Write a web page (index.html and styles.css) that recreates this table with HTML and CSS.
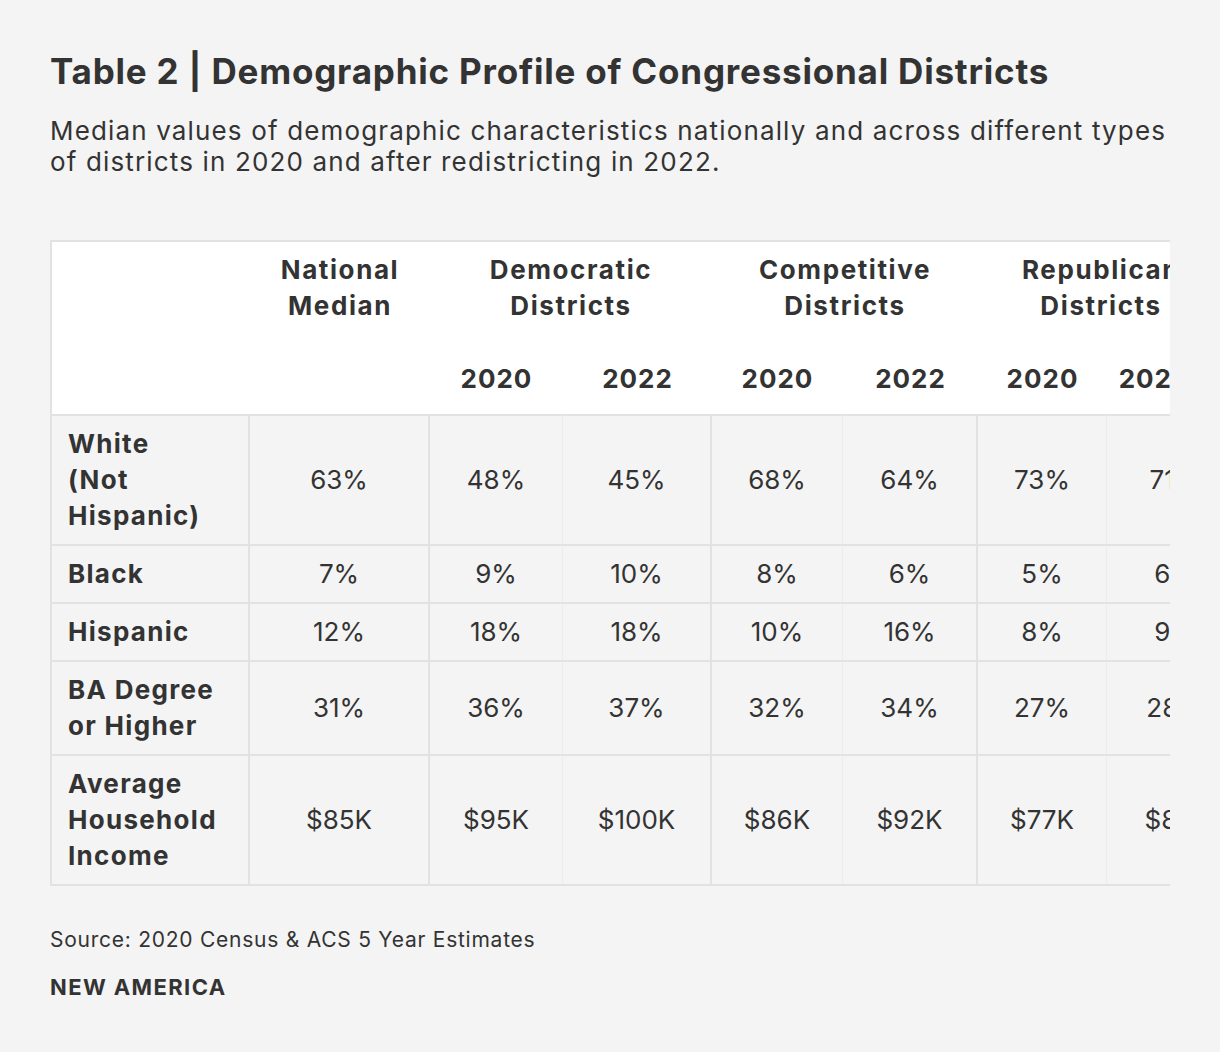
FILE: index.html
```html
<!DOCTYPE html>
<html lang="en">
<head>
<meta charset="utf-8">
<title>Table 2 | Demographic Profile of Congressional Districts</title>
<link rel="stylesheet" href="styles.css">
</head>
<body>
<main class="page">
  <h1 class="title">Table 2 | Demographic Profile of Congressional Districts</h1>
  <p class="subtitle">Median values of demographic characteristics nationally and across different types<br>of districts in 2020 and after redistricting in 2022.</p>
  <div class="table-wrap">
    <table class="data">
      <colgroup>
        <col class="c1"><col class="c2"><col class="c3"><col class="c4"><col class="c5"><col class="c6"><col class="c7"><col class="c8">
      </colgroup>
      <thead>
        <tr class="group-row">
          <th></th>
          <th>National<br>Median</th>
          <th colspan="2">Democratic<br>Districts</th>
          <th colspan="2">Competitive<br>Districts</th>
          <th colspan="2" class="last-group">Republican<br>Districts</th>
        </tr>
        <tr class="year-row">
          <th></th>
          <th></th>
          <th>2020</th><th>2022</th>
          <th>2020</th><th>2022</th>
          <th>2020</th><th class="last-year">2022</th>
        </tr>
      </thead>
      <tbody>
        <tr>
          <th>White<br>(Not<br>Hispanic)</th>
          <td class="g">63%</td><td class="s">48%</td><td class="g">45%</td><td class="s">68%</td><td class="g">64%</td><td class="s">73%</td><td>71%</td>
        </tr>
        <tr>
          <th>Black</th>
          <td class="g">7%</td><td class="s">9%</td><td class="g">10%</td><td class="s">8%</td><td class="g">6%</td><td class="s">5%</td><td>6%</td>
        </tr>
        <tr>
          <th>Hispanic</th>
          <td class="g">12%</td><td class="s">18%</td><td class="g">18%</td><td class="s">10%</td><td class="g">16%</td><td class="s">8%</td><td>9%</td>
        </tr>
        <tr>
          <th>BA Degree<br>or Higher</th>
          <td class="g">31%</td><td class="s">36%</td><td class="g">37%</td><td class="s">32%</td><td class="g">34%</td><td class="s">27%</td><td>28%</td>
        </tr>
        <tr>
          <th>Average<br>Household<br>Income</th>
          <td class="g">$85K</td><td class="s">$95K</td><td class="g">$100K</td><td class="s">$86K</td><td class="g">$92K</td><td class="s">$77K</td><td>$81K</td>
        </tr>
      </tbody>
    </table>
  </div>
  <p class="source">Source: 2020 Census &amp; ACS 5 Year Estimates</p>
  <p class="brand">NEW AMERICA</p>
</main>
</body>
</html>
```
FILE: styles.css
```css
html, body {
  margin: 0;
  padding: 0;
  background: #f4f4f4;
}

body {
  font-family: Inter, "Noto Sans", Arial, sans-serif;
  color: #333333;
}

.page {
  padding: 51px 50px 0 50px;
}

.title {
  margin: 0;
  font-size: 35px;
  line-height: 40px;
  font-weight: 700;
  letter-spacing: 0.8px;
  white-space: nowrap;
}

.subtitle {
  margin: 24px 0 0 0;
  font-size: 26px;
  line-height: 31px;
  font-weight: 400;
  letter-spacing: 1.15px;
  white-space: nowrap;
}

.table-wrap {
  margin-top: 63px;
  width: 1118px;
  overflow: hidden;
  border-top: 2px solid #e2e2e2;
  border-left: 2px solid #e2e2e2;
  border-bottom: 2px solid #e2e2e2;
}

.data {
  table-layout: fixed;
  width: 1191px;
  border-collapse: separate;
  border-spacing: 0;
  font-size: 26px;
  line-height: 36px;
}

.c1 { width: 198px; }
.c2 { width: 180px; }
.c3 { width: 133px; }
.c4 { width: 149px; }
.c5 { width: 131px; }
.c6 { width: 135px; }
.c7 { width: 129px; }
.c8 { width: 136px; }

thead th {
  background: #ffffff;
  font-weight: 700;
  text-align: center;
  padding: 0;
  white-space: nowrap;
}

.group-row th {
  padding: 10px 0 20px 0;
  letter-spacing: 1.6px;
}

.year-row th {
  padding: 17px 0;
  letter-spacing: 1px;
}

.last-group { padding-right: 19px !important; }
.last-year { padding-right: 42px !important; }

tbody th,
tbody td {
  background: #f4f4f4;
  border-top: 2px solid #e2e2e2;
  padding: 10px 0;
  vertical-align: middle;
  white-space: nowrap;
}

tbody th {
  text-align: left;
  font-weight: 700;
  padding-left: 16px;
  border-right: 2px solid #e2e2e2;
  letter-spacing: 1.3px;
}

tbody td {
  text-align: center;
  font-weight: 400;
}

tbody td.g { border-right: 2px solid #e2e2e2; }
tbody td.s { border-right: 1px solid #ececec; }

.source {
  margin: 40px 0 0 0;
  font-size: 21px;
  line-height: 28px;
  letter-spacing: 0.75px;
}

.brand {
  margin: 19px 0 0 0;
  font-size: 22px;
  line-height: 28px;
  font-weight: 700;
  letter-spacing: 1.4px;
}
```
